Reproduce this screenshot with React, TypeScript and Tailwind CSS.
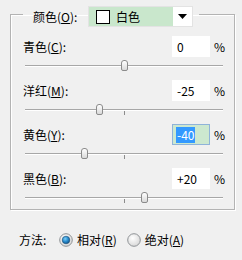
import React from 'react';

interface Channel {
  name: string;
  key: string;
  value: number;
  focused?: boolean;
}

const channels: Channel[] = [
  { name: '青色', key: 'C', value: 0 },
  { name: '洋红', key: 'M', value: -25 },
  { name: '黄色', key: 'Y', value: -40, focused: true },
  { name: '黑色', key: 'B', value: 20 },
];

function fmt(v: number) {
  if (v > 0) return `+${v}`;
  return `${v}`;
}

function Slider({ value }: { value: number }) {
  return (
    <div className="relative ml-[2px] w-[198px] h-[15px]">
      <div className="pt-[8px]">
        <div className="h-[1px] bg-[#a7a7a7]" />
        <div className="h-[1px] bg-white" />
      </div>
      <div className="absolute left-[99px] top-[10px] w-[1px] h-[4px] bg-[#8c8c8c]" />
      <div
        className="absolute top-[3px] w-[7px] h-[11px] rounded-t-[3px] rounded-b-[2px] border border-[#8b8b8b] bg-gradient-to-b from-white to-[#d9d9d9]"
        style={{ left: 99 + value - 3 }}
      />
    </div>
  );
}

function Radio({ checked }: { checked: boolean }) {
  return (
    <svg width="14" height="14" viewBox="0 0 14 14" className="shrink-0">
      <defs>
        <radialGradient id="rg-off" cx="0.4" cy="0.35" r="0.7">
          <stop offset="0" stopColor="#ffffff" />
          <stop offset="1" stopColor="#d6d6d6" />
        </radialGradient>
        <radialGradient id="rg-dot" cx="0.4" cy="0.35" r="0.7">
          <stop offset="0" stopColor="#7fd0f7" />
          <stop offset="0.5" stopColor="#2b8ed0" />
          <stop offset="1" stopColor="#0d4f85" />
        </radialGradient>
      </defs>
      <circle cx="7" cy="7" r="6.3" fill="url(#rg-off)" stroke="#8f9396" strokeWidth="1" />
      {checked && <circle cx="7" cy="7" r="3.8" fill="url(#rg-dot)" stroke="#1d4d74" strokeWidth="0.6" />}
    </svg>
  );
}

export default function App() {
  return (
    <div
      className="w-[242px] h-[260px] bg-[#f0f0f0] text-[12px] text-black leading-none overflow-hidden"
      style={{ fontFamily: '"Noto Sans CJK SC", "Noto Sans", sans-serif' }}
    >
      <fieldset className="ml-[10px] mt-[1px] w-[225px] border border-[#b3b3b3] pl-[12px] pr-[9px] pt-[9px] pb-[5px] shadow-[inset_1px_1px_0_#ffffff,1px_1px_0_#ffffff]">
        <legend className="pt-[5px] pl-[10px] pr-[6px]">
          <div className="flex items-center h-[21px]">
            <span className="w-[55px]">
              颜色(<u>O</u>):
            </span>
            <div className="flex h-[21px] w-[105px] border border-[#e3e3e3]">
              <div className="flex items-center flex-1 bg-[#c9e7cc] pl-[7px]">
                <div className="w-[14px] h-[14px] border border-black bg-white" />
                <span className="ml-[6px]">白色</span>
              </div>
              <div className="flex items-center justify-center w-[19px] bg-white">
                <svg width="9" height="5" viewBox="0 0 9 5">
                  <path d="M0 0 L9 0 L4.5 5 Z" fill="#000" />
                </svg>
              </div>
            </div>
          </div>
        </legend>

        <div className="flex flex-col gap-[8px]">
          {channels.map((c) => (
            <div key={c.key}>
              <div className="flex items-center h-[21px]">
                <span className="flex-1">
                  {c.name}(<u>{c.key}</u>):
                </span>
                {c.focused ? (
                  <div className="flex items-center w-[38px] h-[21px] border border-[#8fb3d9] bg-[#cce8cf] pl-[3px]">
                    <span className="bg-[#3399ff] text-white px-[1px] py-[2px]">{fmt(c.value)}</span>
                  </div>
                ) : (
                  <div className="flex items-center w-[38px] h-[21px] bg-white pl-[5px]">{fmt(c.value)}</div>
                )}
                <span className="ml-[4px] w-[11px]">%</span>
              </div>
              <Slider value={c.value} />
            </div>
          ))}
        </div>
      </fieldset>

      <div className="flex items-center h-[16px] mt-[22px] pl-[19px]">
        <span className="w-[40px]">方法:</span>
        <Radio checked />
        <span className="ml-[4px]">
          相对(<u>R</u>)
        </span>
        <div className="ml-[10px]">
          <Radio checked={false} />
        </div>
        <span className="ml-[4px]">
          绝对(<u>A</u>)
        </span>
      </div>
    </div>
  );
}
